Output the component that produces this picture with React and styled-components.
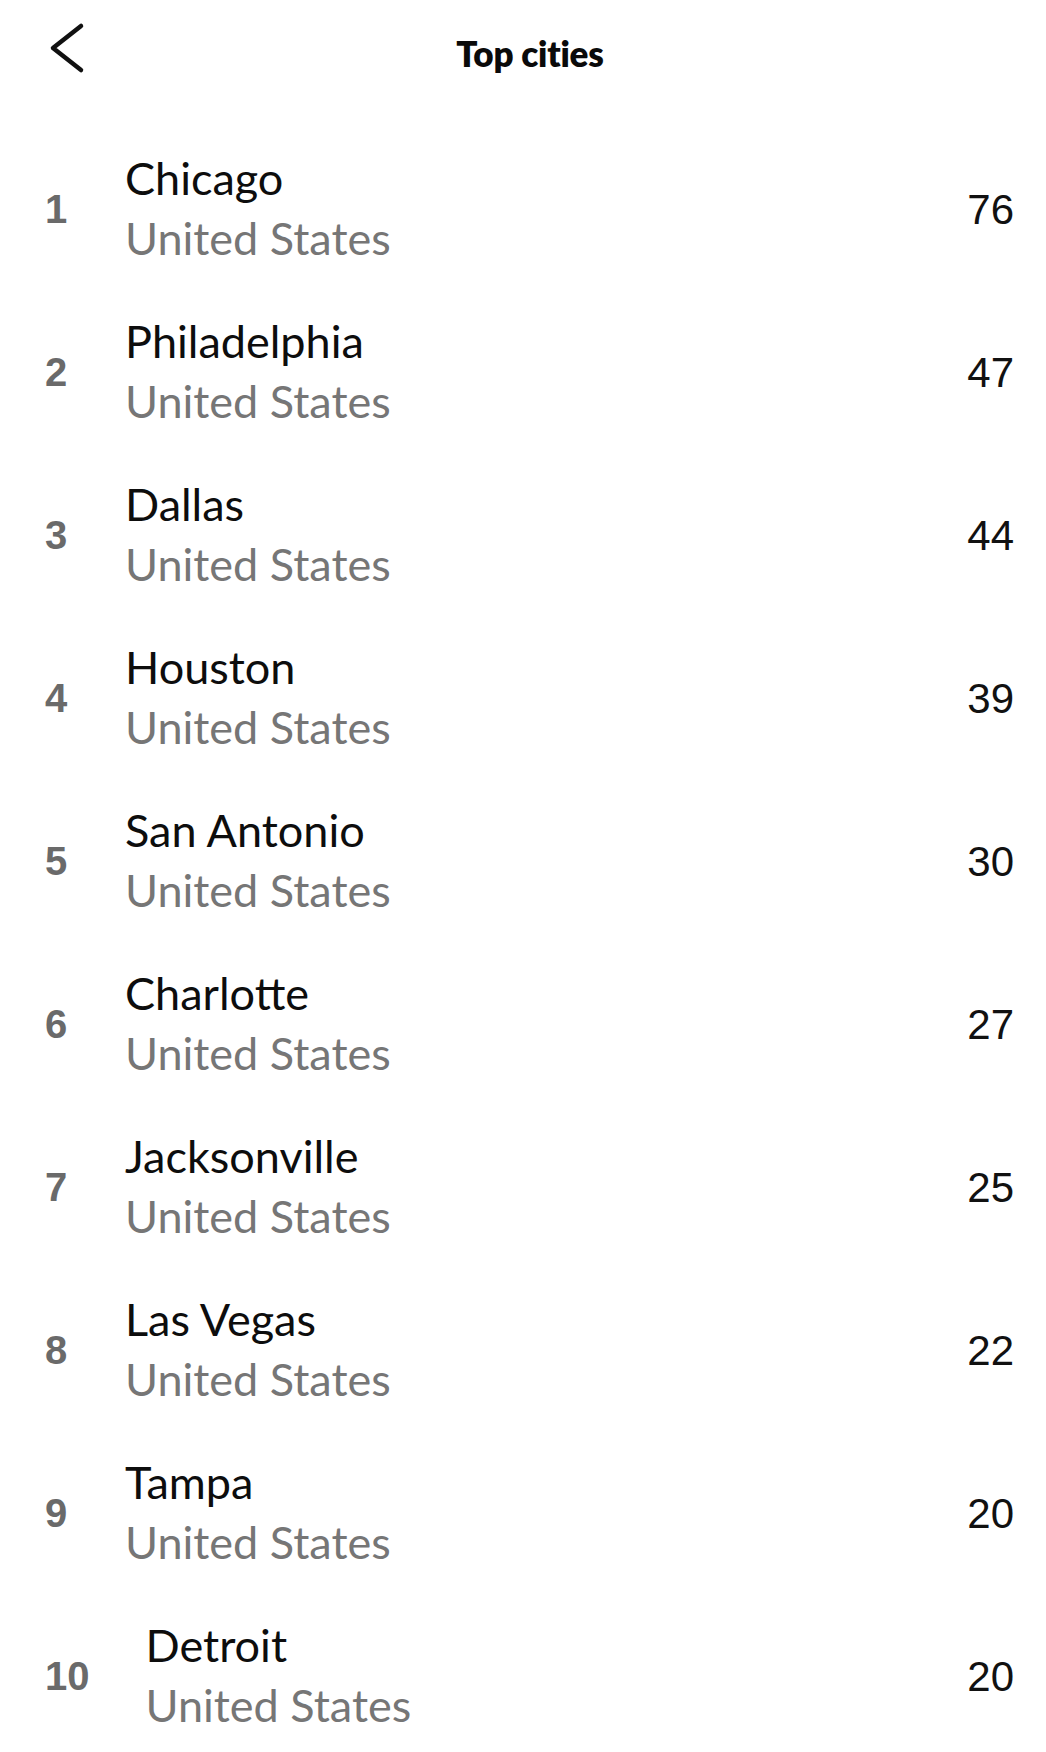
import styled, { createGlobalStyle } from 'styled-components'

const GlobalStyle = createGlobalStyle`
    html, body {
        margin: 0;
        padding: 0;
        background: #ffffff;
    }
    body {
        font-family: 'Lato', 'Liberation Sans', sans-serif;
        color: #111111;
    }
`

const cities = [
    { name: 'Chicago', country: 'United States', count: 76 },
    { name: 'Philadelphia', country: 'United States', count: 47 },
    { name: 'Dallas', country: 'United States', count: 44 },
    { name: 'Houston', country: 'United States', count: 39 },
    { name: 'San Antonio', country: 'United States', count: 30 },
    { name: 'Charlotte', country: 'United States', count: 27 },
    { name: 'Jacksonville', country: 'United States', count: 25 },
    { name: 'Las Vegas', country: 'United States', count: 22 },
    { name: 'Tampa', country: 'United States', count: 20 },
    { name: 'Detroit', country: 'United States', count: 20 },
]

function BackIcon() {
    return (
        <svg width="40" height="52" viewBox="0 0 40 52" fill="none">
            <polyline
                points="34,4 6,26 34,48"
                stroke="#111"
                strokeWidth="4.5"
                strokeLinecap="round"
                strokeLinejoin="round"
            />
        </svg>
    )
}

function App() {
    return (
        <Page>
            <GlobalStyle />
            <Header>
                <BackButton aria-label="Back">
                    <BackIcon />
                </BackButton>
                <Title>Top cities</Title>
                <span />
            </Header>
            <List>
                {cities.map((city, i) => (
                    <Row key={city.name}>
                        <Rank>{i + 1}</Rank>
                        <Info>
                            <CityName>{city.name}</CityName>
                            <Country>{city.country}</Country>
                        </Info>
                        <Count>{city.count}</Count>
                    </Row>
                ))}
            </List>
        </Page>
    )
}
export default App

const Page = styled.div`
    width: 1046px;
    min-height: 1752px;
    background: #fff;
`

const Header = styled.header`
    height: 128px;
    display: grid;
    grid-template-columns: 1fr auto 1fr;
    align-items: start;
    padding-top: 22px;
    box-sizing: border-box;
`

const BackButton = styled.button`
    justify-self: start;
    margin-left: 47px;
    padding: 0;
    border: none;
    background: none;
    display: flex;
    cursor: pointer;
`

const Title = styled.h1`
    margin: 13px 0 0 14px;
    font-family: 'Lato', sans-serif;
    font-weight: 800;
    font-size: 35px;
    letter-spacing: -0.2px;
    line-height: 36px;
    color: #0a0a0a;
`

const List = styled.ol`
    list-style: none;
    margin: 0;
    padding: 0;
`

const Row = styled.li`
    height: 163px;
    display: flex;
    align-items: center;
    gap: 56px;
    padding: 0 32px 0 45px;
    box-sizing: border-box;
`

const Rank = styled.span`
    font-family: 'Liberation Sans', Arial, sans-serif;
    font-weight: 700;
    font-size: 40px;
    color: #6a6a6a;
    min-width: 24px;
`

const Info = styled.div`
    flex: 1;
    display: flex;
    flex-direction: column;
    padding-bottom: 4px;
`

const CityName = styled.span`
    font-size: 45px;
    line-height: 60px;
    color: #0d0d0d;
`

const Country = styled.span`
    font-size: 45px;
    line-height: 60px;
    color: #767676;
`

const Count = styled.span`
    font-family: 'Liberation Sans', Arial, sans-serif;
    font-size: 42px;
    color: #111;
`
